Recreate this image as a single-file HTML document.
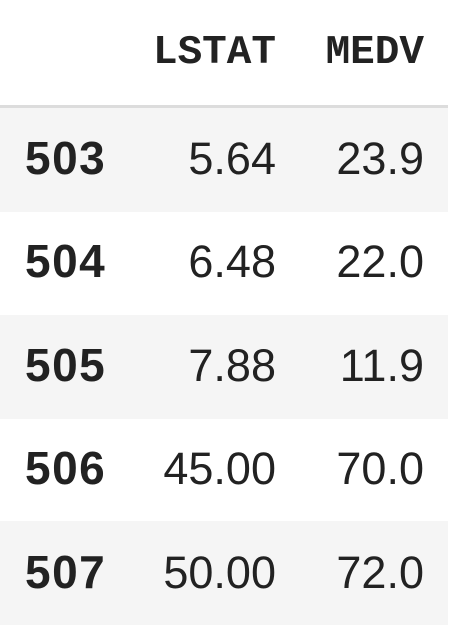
<!DOCTYPE html><html><head><style>
body{margin:0;width:452px;height:624px;background:#fff;position:relative;overflow:hidden;color:#222}
.r{position:absolute;left:0;width:448px;height:104px}
.g{background:#f5f5f5}
.t{position:absolute;white-space:nowrap;line-height:1}
.h{font-family:"Liberation Mono",monospace;font-weight:bold;font-size:41px}
.n{font-family:"Liberation Sans",sans-serif;font-size:45px}
.b{font-weight:bold;font-size:46px;letter-spacing:1.5px}
</style></head><body>
<div class="t h" style="right:176px;top:33px">LSTAT</div>
<div class="t h" style="right:28px;top:33px">MEDV</div>
<div style="position:absolute;left:0;top:105px;width:448px;height:3px;background:#dcdcdc"></div>
<div class="r g" style="top:108px"></div>
<div class="r g" style="top:315px"></div>
<div class="r g" style="top:521px"></div>

<div class="t n b" style="left:25px;top:135px">503</div>
<div class="t n" style="right:176px;top:136px">5.64</div>
<div class="t n" style="right:28px;top:136px">23.9</div>

<div class="t n b" style="left:25px;top:238px">504</div>
<div class="t n" style="right:176px;top:239px">6.48</div>
<div class="t n" style="right:28px;top:239px">22.0</div>

<div class="t n b" style="left:25px;top:342px">505</div>
<div class="t n" style="right:176px;top:343px">7.88</div>
<div class="t n" style="right:28px;top:343px">11.9</div>

<div class="t n b" style="left:25px;top:445px">506</div>
<div class="t n" style="right:176px;top:446px">45.00</div>
<div class="t n" style="right:28px;top:446px">70.0</div>

<div class="t n b" style="left:25px;top:549px">507</div>
<div class="t n" style="right:176px;top:550px">50.00</div>
<div class="t n" style="right:28px;top:550px">72.0</div>
</body></html>
